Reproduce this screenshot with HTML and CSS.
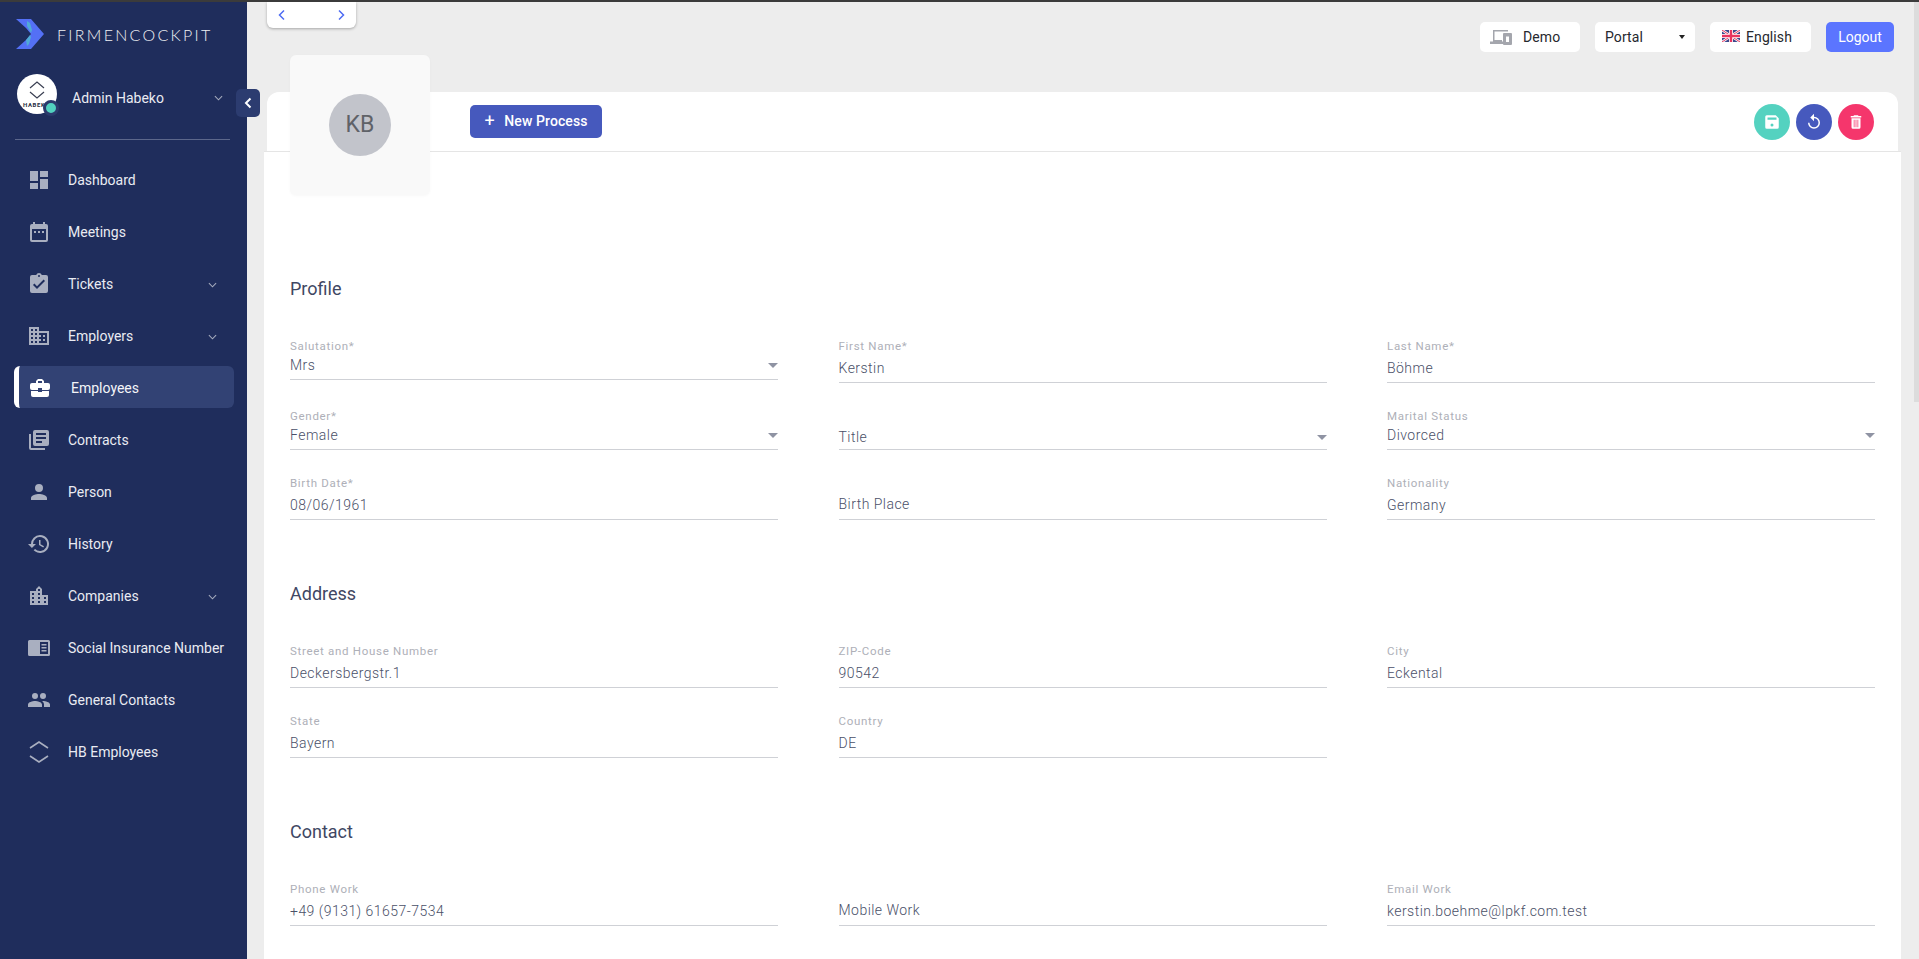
FILE: index.html
```html
<!DOCTYPE html>
<html lang="en">
<head>
    <meta charset="UTF-8">
    <meta name="viewport" content="width=device-width, initial-scale=1.0">
    <title>Firmencockpit - Employee</title>
    <link rel="stylesheet" href="styles.css">
</head>
<body>
    <aside class="sidebar">
        <div class="brand">
            <svg class="brand-logo" viewBox="0 0 28 30">
                <path d="M0 0h15l13 15-13 15H0l10-9 5-6-5-6z" fill="#5470f5"/>
                <path d="M11 2l3 2 2 7-1 3-4-7zM11 27l2-2 2-7-1-2-4 5z" fill="#4fc5c9" opacity="0.7"/>
            </svg>
            <span class="brand-name">FIRMENCOCKPIT</span>
        </div>

        <div class="user">
            <div class="user-avatar">
                <svg viewBox="0 0 40 40" class="user-hex">
                    <path d="M13 14l7-6 7 6M13 18l7 6 7-6" fill="none" stroke="#3a3f52" stroke-width="1.2"/>
                </svg>
                <span class="user-avatar-text">HABEKO</span>
                <span class="user-status"></span>
            </div>
            <span class="user-name">Admin Habeko</span>
            <svg class="chevron user-chevron" viewBox="0 0 10 6"><path d="M1 1l4 4 4-4"/></svg>
        </div>
        <div class="sidebar-line"></div>

        <nav class="menu">
            <a class="menu-item">
                <svg class="menu-icon" viewBox="0 0 24 24"><path d="M3 13h8V3H3zm0 8h8v-6H3zm10 0h8V11h-8zm0-18v6h8V3z"/></svg>
                Dashboard
            </a>
            <a class="menu-item">
                <svg class="menu-icon" viewBox="0 0 24 24"><path d="M19 4h-1V2h-2v2H8V2H6v2H5a2 2 0 0 0-2 2v14a2 2 0 0 0 2 2h14a2 2 0 0 0 2-2V6a2 2 0 0 0-2-2zm0 16H5V9h14zM7 11h2v2H7zm4 0h2v2h-2zm4 0h2v2h-2z"/></svg>
                Meetings
            </a>
            <a class="menu-item">
                <svg class="menu-icon" viewBox="0 0 24 24"><path d="M19 3h-4.200A3 3 0 0 0 12 1a3 3 0 0 0-2.800 2H5a2 2 0 0 0-2 2v14a2 2 0 0 0 2 2h14a2 2 0 0 0 2-2V5a2 2 0 0 0-2-2zm-7 0a1 1 0 1 1 0 2 1 1 0 0 1 0-2zm-2 14l-4-4 1.400-1.400 2.600 2.600 6.600-6.600L18 9z"/></svg>
                Tickets
                <svg class="chevron" viewBox="0 0 10 6"><path d="M1 1l4 4 4-4"/></svg>
            </a>
            <a class="menu-item">
                <svg class="menu-icon" viewBox="0 0 24 24"><path d="M12 7V3H2v18h20V7zM6 19H4v-2h2zm0-4H4v-2h2zm0-4H4V9h2zm0-4H4V5h2zm4 12H8v-2h2zm0-4H8v-2h2zm0-4H8V9h2zm0-4H8V5h2zm10 12h-8v-2h2v-2h-2v-2h2v-2h-2V9h8zm-2-8h-2v2h2zm0 4h-2v2h2z"/></svg>
                Employers
                <svg class="chevron" viewBox="0 0 10 6"><path d="M1 1l4 4 4-4"/></svg>
            </a>
            <a class="menu-item active">
                <svg class="menu-icon" viewBox="0 0 24 24"><path d="M10 16v-1H3l-.01 4a2 2 0 0 0 2 2H19a2 2 0 0 0 2-2v-4h-7v1zm10-9h-4V5l-2-2h-4L8 5v2H4a2 2 0 0 0-2 2v3a2 2 0 0 0 2 2h6v-2h4v2h6a2 2 0 0 0 2-2V9a2 2 0 0 0-2-2zm-6 0h-4V5h4z"/></svg>
                Employees
            </a>
            <a class="menu-item">
                <svg class="menu-icon" viewBox="0 0 24 24"><path d="M4 6H2v14a2 2 0 0 0 2 2h14v-2H4zm16-4H8a2 2 0 0 0-2 2v12a2 2 0 0 0 2 2h12a2 2 0 0 0 2-2V4a2 2 0 0 0-2-2zm-1 9H9V9h10zm-4 4H9v-2h6zm4-8H9V5h10z"/></svg>
                Contracts
            </a>
            <a class="menu-item">
                <svg class="menu-icon" viewBox="0 0 24 24"><path d="M12 12a4 4 0 1 0 0-8 4 4 0 0 0 0 8zm0 2c-2.700 0-8 1.340-8 4v2h16v-2c0-2.660-5.300-4-8-4z"/></svg>
                Person
            </a>
            <a class="menu-item">
                <svg class="menu-icon" viewBox="0 0 24 24"><path d="M13 3a9 9 0 0 0-9 9H1l3.900 3.900L9 12H6a7 7 0 1 1 2.050 4.950L6.640 18.360A9 9 0 1 0 13 3zm-1 5v5l4.250 2.520.77-1.280-3.520-2.090V8z"/></svg>
                History
            </a>
            <a class="menu-item">
                <svg class="menu-icon" viewBox="0 0 24 24"><path d="M15 11V5l-3-3-3 3v2H3v14h18V11zM7 19H5v-2h2zm0-4H5v-2h2zm0-4H5V9h2zm6 8h-2v-2h2zm0-4h-2v-2h2zm0-4h-2V9h2zm0-4h-2V5h2zm6 12h-2v-2h2zm0-4h-2v-2h2z"/></svg>
                Companies
                <svg class="chevron" viewBox="0 0 10 6"><path d="M1 1l4 4 4-4"/></svg>
            </a>
            <a class="menu-item">
                <svg class="menu-icon wide" viewBox="0 0 22 16"><path d="M1.500 0h19A1.500 1.500 0 0 1 22 1.500v13a1.500 1.500 0 0 1-1.500 1.500h-19A1.500 1.500 0 0 1 0 14.500v-13A1.500 1.500 0 0 1 1.500 0zM12 2v12h8V2zm1.500 2h5v1.500h-5zm0 3h5v1.500h-5zm0 3h5v1.500h-5z" fill-rule="evenodd"/></svg>
                Social Insurance Number
            </a>
            <a class="menu-item">
                <svg class="menu-icon" viewBox="0 0 24 24"><path d="M16 11a3 3 0 1 0 0-6 3 3 0 0 0 0 6zm-8 0a3 3 0 1 0 0-6 3 3 0 0 0 0 6zm0 2c-2.330 0-7 1.170-7 3.500V19h14v-2.500C15 14.170 10.330 13 8 13zm8 0c-.29 0-.62.020-.97.050C16.190 13.890 17 15.020 17 16.500V19h6v-2.500c0-2.330-4.670-3.500-7-3.500z"/></svg>
                General Contacts
            </a>
            <a class="menu-item">
                <svg class="menu-icon" viewBox="0 0 24 24"><path d="M3 8l9-6 9 6M3 16l9 6 9-6" fill="none" stroke="currentColor" stroke-width="1.600"/></svg>
                HB Employees
            </a>
        </nav>
    </aside>

    <button class="collapse">
        <svg viewBox="0 0 8 12"><path d="M6.500 1.500L2 6l4.500 4.500"/></svg>
    </button>

    <main class="main">
        <div class="pager">
            <svg viewBox="0 0 8 12"><path d="M6 1.500L1.500 6 6 10.500"/></svg>
            <svg viewBox="0 0 8 12"><path d="M2 1.500L6.500 6 2 10.500"/></svg>
        </div>

        <div class="topbar">
            <div class="top-box demo">
                <svg class="demo-icon" viewBox="0 0 22 16"><path d="M3 1h15v1.500H4.500V11H12v1.500h1V15H0v-2.500h3zM14 4h7a1 1 0 0 1 1 1v10a1 1 0 0 1-1 1h-7a1 1 0 0 1-1-1V5a1 1 0 0 1 1-1zm2 3.500V13h3V7.500z" fill-rule="evenodd"/></svg>
                Demo
            </div>
            <div class="top-box portal">Portal <span class="caret"></span></div>
            <div class="top-box english">
                <svg class="flag" viewBox="0 0 18 12">
                    <rect width="18" height="12" fill="#3c4a8c"/>
                    <path d="M0 0l18 12M18 0L0 12" stroke="#fff" stroke-width="2.400"/>
                    <path d="M0 0l18 12M18 0L0 12" stroke="#e8345f" stroke-width="1"/>
                    <path d="M9 0v12M0 6h18" stroke="#fff" stroke-width="4"/>
                    <path d="M9 0v12M0 6h18" stroke="#e8345f" stroke-width="2.400"/>
                </svg>
                English
            </div>
            <button class="logout">Logout</button>
        </div>

        <div class="head-card">
            <button class="process-btn"><span class="plus">+</span> New Process</button>
            <div class="head-actions">
                <span class="round green">
                    <svg viewBox="0 0 24 24"><path d="M17 3H5a2 2 0 0 0-2 2v14a2 2 0 0 0 2 2h14a2 2 0 0 0 2-2V7zm-5 15a2 2 0 1 1 0-4 2 2 0 0 1 0 4zm6-9H6V6h12z" fill-rule="evenodd"/></svg>
                </span>
                <span class="round blue">
                    <svg viewBox="0 0 24 24"><path d="M12 5V1L7 6l5 5V7a6 6 0 1 1-6 6H4a8 8 0 1 0 8-8z"/></svg>
                </span>
                <span class="round red">
                    <svg viewBox="0 0 24 24"><path d="M6 19a2 2 0 0 0 2 2h8a2 2 0 0 0 2-2V7H6zm3-10h1v10H9zm2.500 0h1v10h-1zm2.500 0h1v10h-1zM19 4h-3.500l-1-1h-5l-1 1H5v2h14z" fill-rule="evenodd"/></svg>
                </span>
            </div>
        </div>

        <div class="avatar-card">
            <div class="avatar-circle">KB</div>
        </div>

        <div class="form-card">
            <h3 class="section-title first">Profile</h3>
            <div class="form-grid">
                <div class="field select"><label>Salutation*</label><div class="value">Mrs<span class="arrow"></span></div></div>
                <div class="field"><label>First Name*</label><div class="value">Kerstin</div></div>
                <div class="field"><label>Last Name*</label><div class="value">Böhme</div></div>
                <div class="field select"><label>Gender*</label><div class="value">Female<span class="arrow"></span></div></div>
                <div class="field select empty"><div class="value">Title<span class="arrow"></span></div></div>
                <div class="field select"><label>Marital Status</label><div class="value">Divorced<span class="arrow"></span></div></div>
                <div class="field"><label>Birth Date*</label><div class="value">08/06/1961</div></div>
                <div class="field empty"><div class="value">Birth Place</div></div>
                <div class="field"><label>Nationality</label><div class="value">Germany</div></div>
            </div>

            <h3 class="section-title">Address</h3>
            <div class="form-grid">
                <div class="field"><label>Street and House Number</label><div class="value">Deckersbergstr.1</div></div>
                <div class="field"><label>ZIP-Code</label><div class="value">90542</div></div>
                <div class="field"><label>City</label><div class="value">Eckental</div></div>
                <div class="field"><label>State</label><div class="value">Bayern</div></div>
                <div class="field"><label>Country</label><div class="value">DE</div></div>
            </div>

            <h3 class="section-title">Contact</h3>
            <div class="form-grid">
                <div class="field"><label>Phone Work</label><div class="value">+49 (9131) 61657-7534</div></div>
                <div class="field empty"><div class="value">Mobile Work</div></div>
                <div class="field"><label>Email Work</label><div class="value">kerstin.boehme@lpkf.com.test</div></div>
            </div>
        </div>
    </main>

    <div class="scroll-thumb"></div>
</body>
</html>
```

FILE: styles.css
```css
* {
    margin: 0;
    padding: 0;
    box-sizing: border-box;
}
html, body {
    height: 100%;
    overflow: hidden;
}
body {
    font-family: Roboto, 'Liberation Sans', sans-serif;
    background-color: #ededed;
    border-top: 2px solid #3b3b3b;
    display: flex;
}

/* sidebar */
.sidebar {
    width: 247px;
    flex-shrink: 0;
    background-color: #1f2d5c;
    color: #e9ebf2;
    padding-top: 17px;
}
.brand {
    display: flex;
    align-items: center;
    padding-left: 16px;
    height: 30px;
}
.brand-logo {
    width: 28px;
    height: 30px;
}
.brand-name {
    font-family: Lato, sans-serif;
    font-size: 16px;
    font-weight: 300;
    letter-spacing: 2.3px;
    color: #f0f1f4;
    margin-left: 13px;
}
.user {
    display: flex;
    align-items: center;
    padding-left: 17px;
    margin-top: 25px;
    position: relative;
}
.user-avatar {
    width: 40px;
    height: 40px;
    border-radius: 50%;
    background-color: #fff;
    position: relative;
}
.user-hex {
    width: 40px;
    height: 40px;
    display: block;
}
.user-avatar-text {
    position: absolute;
    top: 27px;
    left: 6px;
    font-size: 6px;
    font-weight: 700;
    letter-spacing: 0.6px;
    color: #2a2f44;
    white-space: nowrap;
}
.user-status {
    position: absolute;
    right: -2px;
    bottom: -2px;
    width: 16px;
    height: 16px;
    border-radius: 50%;
    background-color: #52d1bf;
    border: 3px solid #2b3a6c;
}
.user-name {
    font-size: 14px;
    margin-left: 15px;
    padding-top: 8px;
}
.user-chevron {
    position: absolute;
    left: 214px;
    top: 21px;
}
.chevron {
    width: 9px;
    height: 6px;
    fill: none;
    stroke: #a5abbd;
    stroke-width: 1.2;
}
.sidebar-line {
    height: 1px;
    margin: 25px 17px 0 15px;
    background-color: #5c678b;
}
.menu {
    margin-top: 14px;
}
.menu-item {
    display: flex;
    align-items: center;
    height: 52px;
    padding-left: 27px;
    font-size: 14px;
    color: #e9ebf2;
    position: relative;
}
.menu-icon {
    width: 24px;
    height: 24px;
    fill: #a9afc0;
    color: #a9afc0;
    margin-right: 17px;
    flex-shrink: 0;
}
.menu-icon.wide {
    width: 22px;
    height: 16px;
    margin-left: 1px;
    margin-right: 18px;
}
.menu-item .chevron {
    position: absolute;
    left: 208px;
    top: 24px;
}
.menu-item.active {
    height: 42px;
    margin: 4px 13px 6px 14px;
    padding-left: 9px;
    padding-top: 1px;
    background-color: #324274;
    border-left: 5px solid #fff;
    border-radius: 6px;
    color: #f4f5f8;
}
.menu-item.active .menu-icon {
    fill: #fff;
    margin-right: 19px;
}

.collapse {
    position: absolute;
    left: 236px;
    top: 89px;
    width: 24px;
    height: 28px;
    background-color: #2c3c70;
    border: none;
    border-radius: 5px;
    z-index: 5;
}
.collapse svg {
    width: 8px;
    height: 12px;
    fill: none;
    stroke: #fff;
    stroke-width: 2;
    display: block;
    margin: 0 auto;
}

/* main area */
.main {
    flex: 1;
    height: 100%;
    overflow: hidden;
    position: relative;
    padding-left: 17px;
    padding-right: 18px;
}
.scroll-thumb {
    position: fixed;
    right: 0;
    top: 2px;
    width: 5px;
    height: 400px;
    background-color: #dcdcdc;
}
.pager {
    position: absolute;
    left: 20px;
    top: 0;
    width: 89px;
    height: 26px;
    background-color: #fff;
    border-radius: 0 0 6px 6px;
    box-shadow: 0 1px 3px rgba(0,0,0,0.3);
    display: flex;
    align-items: center;
    justify-content: space-between;
    padding: 0 11px;
}
.pager svg {
    width: 8px;
    height: 12px;
    fill: none;
    stroke: #4d6bf3;
    stroke-width: 1.5;
}
.topbar {
    display: flex;
    justify-content: flex-end;
    gap: 15px;
    padding-top: 20px;
    padding-right: 7px;
    height: 90px;
}
.top-box {
    height: 30px;
    background-color: #fff;
    border-radius: 5px;
    font-size: 14px;
    color: #26282e;
    display: flex;
    align-items: center;
    letter-spacing: 0.1px;
}
.demo {
    width: 100px;
    padding-left: 10px;
    gap: 11px;
}
.demo-icon {
    width: 22px;
    height: 16px;
    fill: #a4a6ad;
}
.portal {
    width: 100px;
    padding: 0 10px;
    justify-content: space-between;
}
.caret {
    border-left: 3px solid transparent;
    border-right: 3px solid transparent;
    border-top: 4px solid #222;
}
.english {
    width: 101px;
    padding-left: 12px;
    gap: 6px;
}
.flag {
    width: 18px;
    height: 12px;
    margin-top: -2px;
}
.logout {
    width: 68px;
    height: 30px;
    background-color: #5b75ff;
    color: #fff;
    border: none;
    border-radius: 5px;
    font-family: inherit;
    font-size: 14px;
}
.head-card {
    height: 59px;
    margin: 0 3px;
    background-color: #fff;
    border-radius: 12px 12px 0 0;
    display: flex;
    align-items: center;
    justify-content: space-between;
    padding: 0 24px 0 203px;
}
.process-btn {
    height: 33px;
    width: 132px;
    background-color: #4659bd;
    color: #fff;
    border: none;
    border-radius: 5px;
    font-family: inherit;
    font-size: 14px;
    font-weight: 500;
    letter-spacing: 0.1px;
    margin-top: -1px;
}
.plus {
    font-size: 18px;
    font-weight: 400;
    margin-right: 6px;
    line-height: 1;
    vertical-align: -1px;
}
.head-actions {
    display: flex;
    gap: 6px;
}
.round {
    width: 36px;
    height: 36px;
    border-radius: 50%;
    display: flex;
    align-items: center;
    justify-content: center;
}
.round svg {
    width: 18px;
    height: 18px;
    fill: #fff;
}
.green { background-color: #54d2c0; }
.blue { background-color: #4659bd; }
.red { background-color: #f5366c; }
.avatar-card {
    position: absolute;
    left: 43px;
    top: 53px;
    width: 140px;
    height: 140px;
    background-color: #f9f9f9;
    border-radius: 6px;
    box-shadow: 0 1px 3px rgba(0,0,0,0.03);
    display: flex;
    align-items: center;
    justify-content: center;
    z-index: 2;
}
.avatar-circle {
    width: 62px;
    height: 62px;
    border-radius: 50%;
    background-color: #c2c4cb;
    color: #5f6268;
    font-size: 23px;
    display: flex;
    align-items: center;
    justify-content: center;
    margin-top: -1px;
}
.form-card {
    background-color: #fff;
    border-top: 1px solid #e5e5e5;
    padding: 0 26px;
    min-height: 900px;
}
.section-title {
    font-size: 18px;
    font-weight: 400;
    color: #3f4763;
    line-height: 24px;
    padding-top: 62px;
    margin-bottom: 39px;
}
.section-title.first {
    padding-top: 125px;
}
.form-grid {
    display: grid;
    grid-template-columns: repeat(3, 488px);
    column-gap: 60.5px;
    row-gap: 27px;
    align-items: start;
}
.field {
    height: 43px;
    border-bottom: 1px solid #cfd1d6;
    display: flex;
    flex-direction: column;
    justify-content: flex-end;
}
.field.select {
    height: 40px;
}
.field label {
    font-size: 11.5px;
    letter-spacing: 0.7px;
    color: #aeb0b8;
    line-height: 13px;
    margin-bottom: 7px;
}
.field.select label {
    margin-bottom: 4px;
}
.value {
    font-size: 14px;
    font-weight: 300;
    letter-spacing: 0.47px;
    color: #4a5068;
    line-height: 16px;
    padding-bottom: 6px;
    display: flex;
    justify-content: space-between;
    align-items: center;
}
.field.empty .value {
    padding-bottom: 7px;
}
.field.select.empty .value {
    padding-bottom: 4px;
}
.arrow {
    border-left: 5px solid transparent;
    border-right: 5px solid transparent;
    border-top: 5px solid #8f93a3;
}
```
